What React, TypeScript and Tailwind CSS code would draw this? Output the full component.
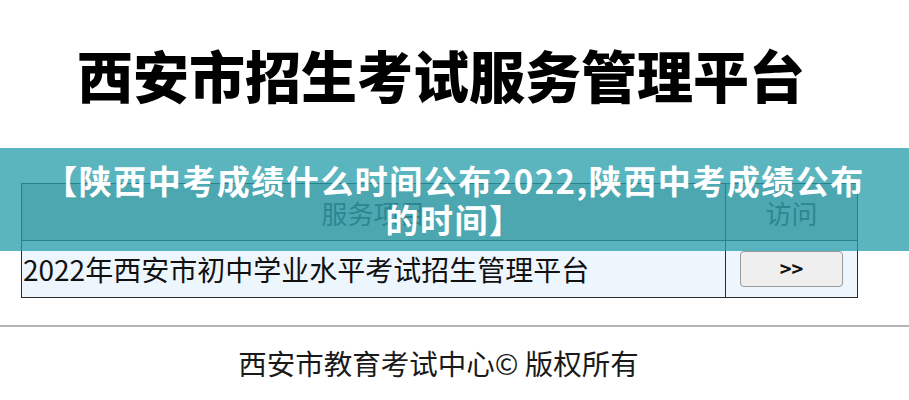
import React from "react";

const cjk = { fontFamily: '"Noto Sans CJK SC", "Noto Sans", sans-serif' };

export default function App() {
  return (
    <div className="relative w-full h-[400px] overflow-hidden bg-white text-[#111]" style={cjk}>
      {/* Site title */}
      <div className="h-[148px] flex items-center pl-[77px]">
        <h1 className="text-[56px] font-black leading-none text-black">西安市招生考试服务管理平台</h1>
      </div>

      {/* Service list */}
      <div className="pt-[35px] px-[21px]">
        <div className="w-[837px] border border-[#2b2b2b] grid grid-cols-[704px_131px]">
          <div className="h-[57px] flex items-center justify-center border-r border-b border-[#2b2b2b] bg-[#c6c6c6] text-[26px] text-[#3a3a3a]">
            服务项目
          </div>
          <div className="h-[57px] flex items-center justify-center border-b border-[#2b2b2b] bg-[#c6c6c6] text-[26px] text-[#3a3a3a]">
            访问
          </div>
          <div className="h-[56px] flex items-center pl-[1px] border-r border-[#2b2b2b] bg-[#eef6fd] text-[28px] text-[#111]">
            2022年西安市初中学业水平考试招生管理平台
          </div>
          <div className="h-[56px] flex items-center justify-center bg-[#eef6fd]">
            <button className="w-[103px] h-[36px] rounded-[4px] border border-[#9a9a9a] bg-[#efefef] text-[20px] font-semibold leading-none text-[#111]">
              &gt;&gt;
            </button>
          </div>
        </div>
      </div>

      {/* Footer */}
      <div className="mt-[27px] border-t-2 border-[#b4b4b4]">
        <p className="h-[72px] flex items-center justify-center pr-[32px] text-[28.5px] text-[#1a1a1a]">
          西安市教育考试中心© 版权所有
        </p>
      </div>

      {/* Headline banner */}
      <div className="absolute left-0 right-0 top-[148px] h-[103px] bg-[rgba(40,158,171,0.76)] flex items-center justify-center">
        <p className="w-[830px] text-center text-white text-[33px] font-bold leading-[39px] tracking-[1.5px]">
          【陕西中考成绩什么时间公布2022,陕西中考成绩公布的时间】
        </p>
      </div>
    </div>
  );
}
